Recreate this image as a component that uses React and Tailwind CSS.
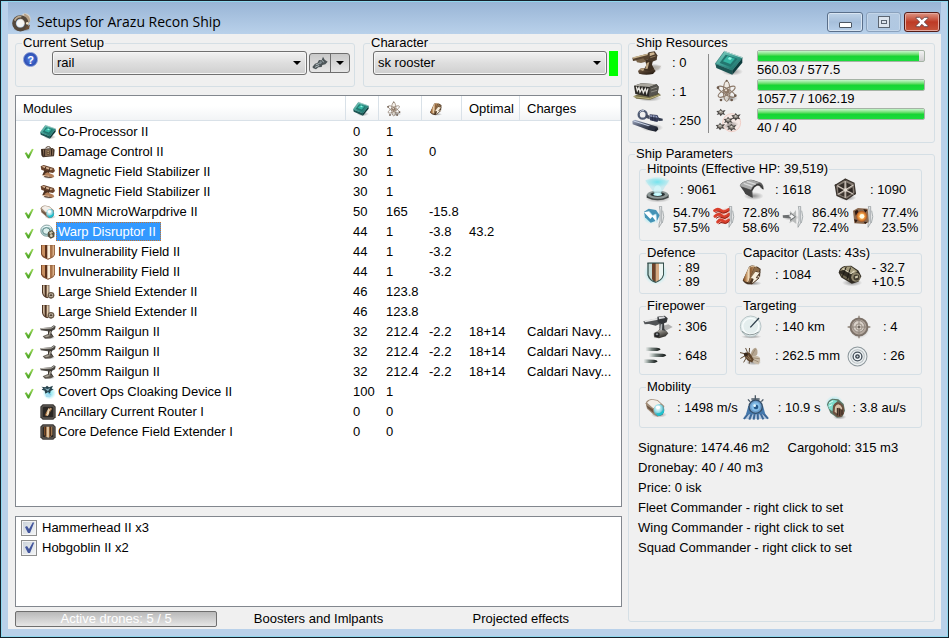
import { useState } from "react";

/* ---------- shared gradients ---------- */

const Gradients = () => (
  <svg width="0" height="0" className="absolute" aria-hidden="true">
    <defs>
      <linearGradient id="teal" x1="0" y1="0" x2="1" y2="1">
        <stop offset="0" stopColor="#8fd9cb" />
        <stop offset="0.5" stopColor="#3a9d92" />
        <stop offset="1" stopColor="#155e5a" />
      </linearGradient>
      <linearGradient id="bronze" x1="0" y1="0" x2="1" y2="0">
        <stop offset="0" stopColor="#6b3f1d" />
        <stop offset="0.25" stopColor="#b98552" />
        <stop offset="0.5" stopColor="#f6e3c4" />
        <stop offset="0.65" stopColor="#8a5a30" />
        <stop offset="1" stopColor="#c49a6c" />
      </linearGradient>
      <linearGradient id="metal" x1="0" y1="0" x2="0.6" y2="1">
        <stop offset="0" stopColor="#d9d6d0" />
        <stop offset="0.45" stopColor="#7b7872" />
        <stop offset="1" stopColor="#24221f" />
      </linearGradient>
      <linearGradient id="brown" x1="0" y1="0" x2="0.7" y2="1">
        <stop offset="0" stopColor="#b8a07f" />
        <stop offset="0.4" stopColor="#5f4a37" />
        <stop offset="1" stopColor="#251b12" />
      </linearGradient>
      <linearGradient id="steel" x1="0" y1="0" x2="0.6" y2="1">
        <stop offset="0" stopColor="#a9b3c9" />
        <stop offset="0.5" stopColor="#4e566b" />
        <stop offset="1" stopColor="#1d212c" />
      </linearGradient>
      <radialGradient id="sphere" cx="0.4" cy="0.35" r="0.7">
        <stop offset="0" stopColor="#ffffff" />
        <stop offset="0.5" stopColor="#8edbe6" />
        <stop offset="1" stopColor="#23707c" />
      </radialGradient>
      <radialGradient id="glow">
        <stop offset="0" stopColor="#6fe3ee" stopOpacity="0.95" />
        <stop offset="0.6" stopColor="#8fe6ee" stopOpacity="0.55" />
        <stop offset="1" stopColor="#a5eef4" stopOpacity="0" />
      </radialGradient>
      <radialGradient id="fire">
        <stop offset="0" stopColor="#fff7cf" />
        <stop offset="0.45" stopColor="#ffb254" />
        <stop offset="1" stopColor="#b4551a" />
      </radialGradient>
      <radialGradient id="shade">
        <stop offset="0" stopColor="#000" stopOpacity="0.4" />
        <stop offset="1" stopColor="#000" stopOpacity="0" />
      </radialGradient>
      <linearGradient id="leaf" x1="0" y1="0" x2="0" y2="1">
        <stop offset="0" stopColor="#a6e060" />
        <stop offset="1" stopColor="#3d9a1c" />
      </linearGradient>
    </defs>
  </svg>
);

const Svg = ({ box, className, children }) => (
  <svg viewBox={box} className={`shrink-0 ${className}`} aria-hidden="true">
    {children}
  </svg>
);

/* ---------- icons ---------- */

const AppIcon = () => (
  <Svg box="0 0 60 60" className="w-5 h-5">
    <ellipse cx="30" cy="52" rx="28" ry="7" fill="url(#shade)" />
    <circle cx="40" cy="20" r="16" fill="#d8d2c8" />
    <path d="M36 5c12 2 20 12 18 24l-8 6-8-16z" fill="#b59f85" />
    <circle cx="25" cy="34" r="19" fill="none" stroke="#54483c" strokeWidth="11" />
    <path d="M8 26a19 19 0 0 1 20-12" fill="none" stroke="#b9a78f" strokeWidth="5" />
    <circle cx="25" cy="34" r="11" fill="#f6f5f2" />
    <path d="M42 44l12-6-3 13-13 4z" fill="#6b5038" />
    <circle cx="46" cy="34" r="4" fill="#efe2c8" />
  </Svg>
);

const Chip = ({ className = "w-4 h-4" }) => (
  <Svg box="0 0 84 76" className={className}>
    <ellipse cx="52" cy="64" rx="32" ry="12" fill="url(#shade)" />
    <path d="M1 40l51 20v13L4 53z" fill="#1d5553" />
    <path d="M52 60l30-38v15L52 73z" fill="#0d3c3d" />
    <path d="M28 3l54 19-30 38L1 40z" fill="url(#teal)" stroke="#24716c" strokeWidth="2" />
    <path d="M32 13l36 12-21 25-33-12z" fill="#23766f" />
    <path d="M37 17l23 8-14 16-22-8z" fill="#35b5a3" />
    <path d="M43 20l8 3-5 6-8-3z" fill="#8ff5e2" />
    <path d="M28 3l54 19" stroke="#b5ddd6" strokeWidth="3" />
  </Svg>
);

const Atom = ({ className = "w-4 h-4" }) => (
  <Svg box="0 0 70 72" className={className}>
    <ellipse cx="42" cy="58" rx="26" ry="10" fill="url(#shade)" />
    <g fill="none" stroke="#8b7868" strokeWidth="3">
      <ellipse cx="34" cy="36" rx="10" ry="31" fill="#efe6da" fillOpacity="0.6" />
      <ellipse cx="34" cy="38" rx="9" ry="29" transform="rotate(60 34 38)" />
      <ellipse cx="34" cy="38" rx="9" ry="29" transform="rotate(-60 34 38)" />
    </g>
    <circle cx="34" cy="37" r="8" fill="#8d7866" />
    <circle cx="32" cy="34" r="3" fill="#f0e4d8" />
    <g fill="#6b594b">
      <circle cx="34" cy="5" r="3" />
      <circle cx="8" cy="26" r="4" />
      <circle cx="60" cy="50" r="4" />
      <circle cx="17" cy="63" r="4" />
      <circle cx="49" cy="63" r="4" />
    </g>
  </Svg>
);

const Cell = ({ className = "w-4 h-4" }) => (
  <Svg box="0 0 66 66" className={className}>
    <ellipse cx="36" cy="58" rx="26" ry="7" fill="url(#shade)" />
    <path d="M24 8Q34 0 51 9l8 6-2 25-24 20Q16 64 5 50z" fill="#4a3523" />
    <path d="M24 9Q32 3 41 6L22 55Q11 54 6 48z" fill="url(#bronze)" />
    <path d="M42 7l14 9-2 9-10-4-10 21-9 14-4-1z" fill="#8c6b48" />
    <path d="M43 23l14 3-6 10 7 3-26 23 6-17-8-4z" fill="#f7eedd" />
    <path d="M57 26L46 41l8 1-22 19" fill="none" stroke="#4a3220" strokeWidth="3" />
    <path d="M28 9Q36 4 46 8" fill="none" stroke="#d9c5a8" strokeWidth="3" />
  </Svg>
);

const Turret = () => (
  <Svg box="0 0 90 72" className="w-[30px] h-6">
    <ellipse cx="66" cy="50" rx="24" ry="12" fill="url(#shade)" />
    <path d="M62 44l26 0-8 11-20 6z" fill="#b9b4aa" opacity="0.7" />
    <path d="M18 60l8-8 36-3 9 11-8 9q-22 5-42-1z" fill="url(#brown)" />
    <path d="M24 55l14-4 8 3-15 6z" fill="#b49d7c" />
    <path d="M39 27l25-4-4 18 6 12-12 7-19-2 8-16z" fill="#3d2e20" />
    <path d="M44 36l8-3-5 20-7 1z" fill="#bda684" />
    <path d="M50 4l18-3 8 12-2 14-13 5-14-5-4-12z" fill="#49392a" />
    <path d="M53 6l12-2 4 6-16 6z" fill="#cdb591" />
    <path d="M1 20l45-12 6 8-2 9-17 5-11-3-19 3z" fill="#56432f" />
    <path d="M3 21l44-11" stroke="#c9b48f" strokeWidth="4" />
    <path d="M12 28l22-6 8 10-15 4-12-2z" fill="#79644a" />
    <path d="M55 20l16-5" stroke="#927b5c" strokeWidth="3" />
  </Svg>
);

const Launcher = () => (
  <Svg box="0 0 90 60" className="w-[30px] h-5">
    <ellipse cx="52" cy="49" rx="37" ry="10" fill="url(#shade)" />
    <path d="M4 43l16-7 60-3 7 7-33 13-41-3z" fill="#77704a" />
    <path d="M6 11L28 4l46 3 6 7-3 22-27 8L10 36z" fill="#2b2925" />
    <path d="M6 11L28 4l46 3-22 8z" fill="#aaa79e" />
    <path d="M53 15l21-8 6 7-3 22-26 8z" fill="#56544e" />
    <path d="M13 14l3 12 5-9 3 13 6-11 4 13 6-12 4 13 4-14" fill="none" stroke="#e8e6e0" strokeWidth="4" />
    <path d="M57 21l18-6M57 30l18-5" stroke="#8d8b83" strokeWidth="3" />
    <path d="M5 44l47 6 31-11" fill="none" stroke="#c0b782" strokeWidth="3" />
  </Svg>
);

const Calibration = () => (
  <Svg box="0 0 96 72" className="w-8 h-6">
    <ellipse cx="60" cy="56" rx="34" ry="12" fill="url(#shade)" />
    <circle cx="32" cy="17" r="12" fill="none" stroke="#515c74" strokeWidth="7" />
    <path d="M23 10a12 12 0 0 1 13-5" fill="none" stroke="#c5cee0" strokeWidth="3" />
    <path d="M43 16l10 4v11l-12-5z" fill="#444b5e" />
    <path d="M53 16l23 2 6 11-6 10-22-5z" fill="#353b58" />
    <path d="M55 18l19 2 3 6-22-3z" fill="#9aa4c6" />
    <path d="M61 18v17M69 20v17" stroke="#20243a" strokeWidth="2" />
    <path d="M80 26l12 3v6l-13 1z" fill="#323a4d" />
    <path d="M1 36l8-4 43 14 24 7 3 8-7 7-22-5L2 46z" fill="url(#steel)" />
    <path d="M5 36l48 15" stroke="#c9d3e6" strokeWidth="3" />
    <path d="M50 50l20 7-3 8-18-4z" fill="#2d3344" />
  </Svg>
);

const DroneShape = ({ x, y }) => (
  <g transform={`translate(${x} ${y})`}>
    <path d="M0 7l9-1 4-6 5 6 10-2-6 8 5 7-9-2-5 6-4-6-8 2 4-6z" fill="#4a4744" />
    <path d="M6 9l7-4 5 3 3 4-6 3-6-1z" fill="#9a948c" />
    <circle cx="13" cy="9" r="2" fill="#e8e4dc" />
  </g>
);

const Drones = () => (
  <Svg box="0 0 84 78" className="w-7 h-[26px]">
    <circle cx="50" cy="44" r="27" fill="#f9e4dd" fillOpacity="0.6" stroke="#efc0b5" strokeWidth="2" />
    <path d="M22 54l38-16 12 10-30 18z" fill="url(#shade)" />
    <DroneShape x={4} y={2} />
    <DroneShape x={49} y={15} />
    <DroneShape x={26} y={26} />
    <DroneShape x={2} y={44} />
    <DroneShape x={36} y={47} />
  </Svg>
);

const ShieldHp = () => (
  <Svg box="0 0 84 78" className="w-7 h-[26px]">
    <ellipse cx="42" cy="65" rx="38" ry="12" fill="url(#shade)" />
    <path d="M8 53l16-9h34l16 9v9q-33 15-66 0z" fill="#3f4444" />
    <ellipse cx="41" cy="53" rx="32" ry="12" fill="#8d9796" />
    <ellipse cx="41" cy="52" rx="22" ry="7" fill="#2a3334" />
    <ellipse cx="41" cy="52" rx="13" ry="5" fill="#bffaff" />
    <path d="M4 10q20-8 40-3t32 2L50 50H32z" fill="#9fe0ea" opacity="0.45" />
    <ellipse cx="40" cy="15" rx="39" ry="17" fill="url(#glow)" />
    <ellipse cx="41" cy="40" rx="11" ry="15" fill="#d9fcff" opacity="0.6" />
  </Svg>
);

const Armor = () => (
  <Svg box="0 0 78 68" className="w-[26px] h-6">
    <ellipse cx="44" cy="52" rx="30" ry="12" fill="url(#shade)" />
    <path d="M2 22Q4 14 12 10L28 4q8-2 14 0l24 8q8 6 8 20l-8-3q-4-10-12-8-8 3-14 16l2 20-24-12-3-14z" fill="#5b5b5b" />
    <path d="M3 22Q6 13 14 10L28 5q7-2 13 0l22 8q-18-1-27 20z" fill="#a9aaaa" />
    <path d="M14 14l26 9M24 9l26 8" stroke="#d9dada" strokeWidth="4" />
    <path d="M5 24l32 11 3 22-20-11z" fill="#444" />
    <path d="M38 36q8-19 22-18 11 4 12 14" fill="none" stroke="#2d2d2d" strokeWidth="3" />
  </Svg>
);

const Hull = () => (
  <Svg box="0 0 68 70" className="w-[23px] h-6">
    <ellipse cx="40" cy="58" rx="26" ry="9" fill="url(#shade)" />
    <path d="M33 3l26 12 4 30-26 18L9 51 4 21z" fill="#857b72" stroke="#3b342e" strokeWidth="4" />
    <path d="M31 13L14 22l16 10zM37 13l16 8-15 11z" fill="#352e29" />
    <path d="M12 27l16 9-15 10zM55 27L40 36l16 8z" fill="#2b2521" />
    <path d="M31 40v15L17 49zM37 40v15l16-9z" fill="#3c342e" />
    <path d="M33 8v51M9 22l49 26M58 20L11 48" stroke="#d8cfc6" strokeWidth="3" />
    <circle cx="34" cy="35" r="5" fill="#e6ded5" />
    <circle cx="33" cy="5" r="3" fill="#3b342e" />
    <circle cx="61" cy="46" r="3" fill="#3b342e" />
    <circle cx="5" cy="21" r="3" fill="#3b342e" />
  </Svg>
);

/* curved plate standing right of every damage type */
const Plate = () => (
  <g>
    <path d="M49 1h7v50l-8 13V54l3-9V14z" fill="#e0e3e4" stroke="#8d9396" strokeWidth="2" />
    <path d="M59 14q7 18-1 37" fill="none" stroke="#a9afb1" strokeWidth="3" />
  </g>
);

const Em = () => (
  <Svg box="0 0 66 66" className="w-[22px] h-[22px]">
    <ellipse cx="24" cy="31" rx="25" ry="24" fill="url(#glow)" />
    <path d="M3 17l14-9 22 4 11 16-7 15-20 7L6 34z" fill="#2f84ab" opacity="0.85" />
    <path d="M18 16L3 19l19 20 6-7 14 18-3-26-10 4z" fill="#fff" />
    <path d="M18 16l11 13 10-5 3 26" fill="none" stroke="#9fd4ea" strokeWidth="2" />
    <Plate />
  </Svg>
);

const Thermal = () => (
  <Svg box="0 0 66 66" className="w-[22px] h-[22px]">
    <path d="M14 12l35-6v46l-31 2z" fill="#f0a295" opacity="0.6" />
    <g fill="none" stroke="#d93f2c" strokeWidth="9" strokeLinecap="round">
      <path d="M5 14q10-8 19 0t24-4" />
      <path d="M6 31q12-11 20-2t22-4" />
      <path d="M14 48q8-10 16-3t18-3" />
    </g>
    <g fill="none" stroke="#8f2116" strokeWidth="3">
      <path d="M7 20q11-7 17-1t23-4M9 37q10-9 18-2t20-4M17 54q7-8 14-3t16-4" />
    </g>
    <Plate />
  </Svg>
);

const Kinetic = () => (
  <Svg box="0 0 66 66" className="w-[22px] h-[22px]">
    <ellipse cx="26" cy="34" rx="26" ry="9" fill="url(#shade)" />
    <path d="M24 14l9 9 9-11 1 42-11-8-10 6 5-17z" fill="#b9bbbb" />
    <path d="M2 28l24-2-3-7 19 13-18 14 2-9-23-2z" fill="#6c6f70" />
    <path d="M20 29l8-2-2-4 12 9-12 8 1-5z" fill="#f3f3f3" />
    <Plate />
  </Svg>
);

const Explosive = () => (
  <Svg box="0 0 66 66" className="w-[22px] h-[22px]">
    <path d="M3 14L18 6l29 2 4 40-12 6L7 52z" fill="#8b6a50" />
    <path d="M8 16l8-5 4 8-9 10zM6 40l11 2-6 9zM34 9l12 3-6 8zM35 47l11 1-6 6z" fill="#2f1a11" />
    <circle cx="29" cy="31" r="16" fill="url(#fire)" />
    <circle cx="30" cy="31" r="7" fill="#fffde9" />
    <Plate />
  </Svg>
);

const DefenceShield = () => (
  <Svg box="0 0 72 72" className="w-6 h-6">
    <ellipse cx="35" cy="36" rx="36" ry="36" fill="url(#glow)" />
    <path d="M10 6h50v36q-5 17-25 24Q15 60 10 42z" fill="#3b5450" />
    <path d="M14 7h12v52Q17 52 14 41z" fill="#c4dcd7" />
    <path d="M24 7h11v55l-11-7z" fill="#6d4129" />
    <path d="M35 7h10v50l-10 6z" fill="#d6ab84" />
    <path d="M45 7h12v34q-3 12-12 17z" fill="#edf5f2" />
    <path d="M10 6h50" stroke="#24403f" strokeWidth="3" />
  </Svg>
);

const Recharge = () => (
  <Svg box="0 0 76 68" className="w-[25px] h-[23px]">
    <ellipse cx="43" cy="56" rx="31" ry="11" fill="url(#shade)" />
    <path d="M2 26Q4 10 20 5l20-1 22 15 9 17-9 17-20 6L10 40z" fill="#302b22" />
    <path d="M6 20Q12 9 22 7l17 0 20 14-11 8-26-14z" fill="#a59c7d" />
    <path d="M14 13l26 15 10-8" fill="none" stroke="#ded7bc" strokeWidth="4" />
    <path d="M7 27l26 15 2 9-23-13z" fill="#6c644e" />
    <path d="M25 8L13 38M38 10L27 46" stroke="#1b1812" strokeWidth="3" />
    <circle cx="54" cy="39" r="14" fill="#8d846b" />
    <circle cx="56" cy="40" r="9" fill="#3f392d" />
    <path d="M51 37l9-3 1 6-8 3z" fill="#cfc7ab" />
  </Svg>
);

const Gun = () => (
  <Svg box="0 0 90 72" className="w-[30px] h-6">
    <path d="M48 36l28-8 13 8-17 9-18 9z" fill="#b0b0b0" />
    <path d="M1 19l45-9 7 3 1 12-16 7-20-5-13 1z" fill="#505356" />
    <path d="M5 19l44-8" stroke="#e4e4e4" strokeWidth="5" />
    <path d="M43 5l22-3 9 8-3 12-15 6-12-7z" fill="#33363a" />
    <path d="M47 6l16-2 4 5-19 4z" fill="#d8dadd" />
    <path d="M49 26l14-4 1 20 8 10-14 6-16-6 8-10z" fill="#3a3d40" />
    <path d="M53 28l5-1-1 20-6 1z" fill="#b6babd" />
    <path d="M32 54l18-10 20 4 6 7-8 9-20 6-15-3z" fill="url(#metal)" />
    <ellipse cx="42" cy="59" rx="8" ry="7" fill="#1f2023" />
    <ellipse cx="42" cy="58" rx="4" ry="3" fill="#8e9195" />
  </Svg>
);

const Volley = () => (
  <Svg box="0 0 72 60" className="w-6 h-5">
    <defs>
      <linearGradient id="trail">
        <stop offset="0" stopColor="#8fa39a" stopOpacity="0" />
        <stop offset="0.4" stopColor="#7d8985" />
        <stop offset="1" stopColor="#090d0c" />
      </linearGradient>
    </defs>
    <path d="M7 4l35 1q8 1 11 5-3 4-10 5H7z" fill="url(#trail)" />
    <path d="M17 22l42 1q8 1 11 5-3 4-10 5H17z" fill="url(#trail)" />
    <path d="M1 40l32 1q8 1 11 5-3 4-10 5H1z" fill="url(#trail)" />
  </Svg>
);

const Range = () => (
  <Svg box="0 0 72 72" className="w-6 h-6">
    <ellipse cx="37" cy="65" rx="31" ry="6" fill="url(#shade)" />
    <circle cx="35" cy="34" r="31" fill="#e4eeee" stroke="#b9c6c8" strokeWidth="3" />
    <circle cx="35" cy="34" r="24" fill="none" stroke="#f9fdfd" strokeWidth="4" />
    <path d="M34 37L60 9" stroke="#2e3f4b" strokeWidth="4" />
    <path d="M9 49q22 20 50 2" fill="none" stroke="#8c9899" strokeWidth="3" />
  </Svg>
);

const Targets = () => (
  <Svg box="0 0 74 74" className="w-6 h-6">
    <circle cx="39" cy="42" r="31" fill="url(#shade)" />
    <path d="M37 2v70M2 37h70" stroke="#8d8278" strokeWidth="4" />
    <circle cx="37" cy="37" r="26" fill="#b3a79d" stroke="#7d7269" strokeWidth="6" />
    <circle cx="36" cy="35" r="18" fill="#d9d1c9" stroke="#91877e" strokeWidth="3" />
    <path d="M37 15v44M15 37h44" stroke="#8f857b" strokeWidth="3" />
    <circle cx="37" cy="37" r="10" fill="none" stroke="#998f85" strokeWidth="3" />
    <circle cx="37" cy="37" r="3" fill="#5d544c" />
  </Svg>
);

const Fly = () => (
  <Svg box="0 0 70 64" className="w-[23px] h-[21px]">
    <ellipse cx="44" cy="50" rx="24" ry="9" fill="url(#shade)" />
    <path d="M34 28Q40 6 51 5q8 6 4 22l-14 12z" fill="#b5a692" />
    <path d="M38 34q16-9 26 2 3 10-4 20-14 0-20-10z" fill="#c9bca9" />
    <path d="M38 30L50 9M41 40l19 9M42 36l21 3" stroke="#8c7960" strokeWidth="2" />
    <path d="M20 24L3 20M18 30L4 38M22 36l-8 14M26 20l-6-14M31 20l1-14M32 40l-1 14" fill="none" stroke="#5d4832" strokeWidth="3" />
    <path d="M17 25q7-9 16-4l12 20-5 9-14-6-9-11z" fill="#5e4329" />
    <path d="M25 26l12 17M21 31l11 11" stroke="#b2997a" strokeWidth="2" />
    <circle cx="21" cy="26" r="6" fill="#38281b" />
  </Svg>
);

const Rings = () => (
  <Svg box="0 0 62 62" className="w-[21px] h-[21px]">
    <circle cx="31" cy="31" r="28" fill="#edf1f2" stroke="#8d979c" strokeWidth="3" />
    <circle cx="31" cy="31" r="20" fill="none" stroke="#b9c0c4" strokeWidth="3" />
    <circle cx="31" cy="31" r="13" fill="#f4f8fb" stroke="#46515b" strokeWidth="4" />
    <circle cx="31" cy="31" r="5" fill="#c6d0d9" stroke="#323c45" strokeWidth="4" />
  </Svg>
);

const Speed = ({ className = "w-[22px] h-5" }) => (
  <Svg box="0 0 66 60" className={className}>
    <ellipse cx="42" cy="50" rx="24" ry="9" fill="url(#shade)" />
    <path d="M2 16Q6 4 20 3l18 3 20 18-4 22-16 10-12-6L6 32z" fill="#a08b76" />
    <path d="M6 14Q12 5 21 5l16 3 10 9-22 14z" fill="#f3eee8" />
    <path d="M4 22l20 12 2 12L8 30z" fill="#6d5542" />
    <ellipse cx="42" cy="36" rx="16" ry="18" fill="url(#sphere)" />
    <path d="M34 44q12 6 22-10l1 8q-8 13-20 11z" fill="#1fc3cf" />
    <ellipse cx="39" cy="28" rx="7" ry="5" fill="#fff" />
  </Svg>
);

const Align = () => (
  <Svg box="0 0 84 78" className="w-7 h-[26px]">
    <path d="M12 56h58l11 16H2z" fill="#9bb8d7" opacity="0.7" />
    <path d="M20 54L6 72M29 56l-7 18M38 56l-3 18M47 56l1 18M56 56l8 17M63 54l15 17" stroke="#3c6797" strokeWidth="6" />
    <path d="M19 33l44-1 7 26H12z" fill="#4478ac" />
    <circle cx="41" cy="35" r="20" fill="#6b9cca" stroke="#334e69" strokeWidth="4" />
    <circle cx="41" cy="35" r="13" fill="#83bde8" />
    <circle cx="42" cy="36" r="7" fill="#245788" />
    <circle cx="38" cy="32" r="4" fill="#e5f8ff" />
    <path d="M40 15V1M28 12h25M24 20l-6-7M58 20l6-7" fill="none" stroke="#4b5966" strokeWidth="4" />
  </Svg>
);

const Warp = () => (
  <Svg box="0 0 66 72" className="w-[22px] h-6">
    <ellipse cx="44" cy="63" rx="20" ry="8" fill="url(#shade)" />
    <ellipse cx="28" cy="24" rx="28" ry="26" fill="url(#glow)" />
    <path d="M6 26Q8 12 22 8l18 2 16 14 4 20-8 18-16 3-20-14z" fill="#5d7666" />
    <path d="M9 26q4-12 15-15l14 3-14 15-2 17-10-8z" fill="#7fdccd" />
    <path d="M24 34q2-13 14-15 14 2 19 16v18l-9 10H37L24 52z" fill="#6d5140" />
    <path d="M30 33q4-8 10-8 8 2 11 10v6l-8-6-6 1v17l-8-6z" fill="#d8c3aa" />
    <path d="M37 36v22M44 38v22M51 41v16" stroke="#33271f" strokeWidth="3" />
    <path d="M12 21l12-6M11 31l10-5" stroke="#dffff4" strokeWidth="3" />
  </Svg>
);

/* ---------- 16px module icons ---------- */

const Case = () => (
  <Svg box="0 0 48 48" className="w-4 h-4">
    <path d="M17 13q1-5 8-5t7 5" fill="none" stroke="#4b3727" strokeWidth="3" />
    <path d="M3 15l35-3 6 5-2 20-33 3-5-6z" fill="#4b3a2d" />
    <path d="M9 17l29-2 1 19-28 3z" fill="#8b7059" />
    <path d="M6 17l3 21M14 16v21M34 15l1 20" stroke="#2f2118" strokeWidth="3" />
    <path d="M20 20h9v12h-9z" fill="#5b4029" />
    <path d="M22 23h5M22 28h5" stroke="#e4ce9d" strokeWidth="2" />
  </Svg>
);

const Coil = () => (
  <Svg box="0 0 48 48" className="w-4 h-4">
    <ellipse cx="26" cy="40" rx="18" ry="5" fill="url(#shade)" />
    <path d="M2 7l9-4 30 9 4 9-6 6-18-3L4 17z" fill="#6b452e" />
    <path d="M5 8l6-2 28 9-7 4z" fill="#dcb898" />
    <path d="M14 18l16 3-6 10 14 4-2 7-21-2-8-7z" fill="#4b3020" />
    <path d="M12 31l10-6 18 7 3 6-8 3z" fill="#b4815b" />
    <path d="M8 34l20 3" stroke="#e6c4a5" strokeWidth="3" />
    <path d="M18 8l-4 9M30 12l-4 9" stroke="#3c2417" strokeWidth="3" />
  </Svg>
);

const Disruptor = () => (
  <Svg box="0 0 48 48" className="w-4 h-4">
    <ellipse cx="20" cy="20" rx="18" ry="17" fill="#a9cbcb" stroke="#6f8b8b" strokeWidth="2" />
    <ellipse cx="19" cy="21" rx="11" ry="10" fill="#dcefed" stroke="#5f8988" strokeWidth="3" />
    <path d="M5 14q12-12 28-4" fill="none" stroke="#f4ffff" strokeWidth="3" />
    <path d="M24 24l12-6 8 8-1 13-11 5-9-7z" fill="#55503f" />
    <path d="M27 26l8-4 4 4-8 5z" fill="#c9c2a8" />
    <circle cx="34" cy="35" r="4" fill="#d9d1b6" />
  </Svg>
);

const Field = () => (
  <Svg box="0 0 48 48" className="w-4 h-4">
    <path d="M3 3h42v28Q42 42 24 47 6 42 3 31z" fill="#7c4b2c" />
    <path d="M6 4h9v34q-8-4-9-9z" fill="#c88f60" />
    <path d="M15 4h8v39l-8-4z" fill="#5a301a" />
    <path d="M22 4h8v38l-8 2z" fill="#fbeeda" />
    <path d="M30 4h6v36l-6 2z" fill="#a8734a" />
    <path d="M37 4h6v26q-1 5-6 9z" fill="#dcae84" />
  </Svg>
);

const Extender = () => (
  <Svg box="0 0 48 48" className="w-4 h-4">
    <path d="M6 3h22v34l-6 6Q8 38 6 26z" fill="#4b3222" />
    <path d="M9 4h5v32q-5-4-5-12z" fill="#cdb79e" />
    <path d="M20 4h6v32l-6 4z" fill="#e3cdb0" />
    <circle cx="33" cy="34" r="8" fill="#e5ddd0" stroke="#6b5b49" strokeWidth="4" />
    <path d="M33 24v20M23 34h20" stroke="#6b5b49" strokeWidth="2" />
    <circle cx="33" cy="34" r="3" fill="#493a2b" />
  </Svg>
);

const Railgun = () => (
  <Svg box="0 0 48 48" className="w-4 h-4">
    <ellipse cx="28" cy="41" rx="18" ry="5" fill="url(#shade)" />
    <path d="M1 13l32-3 8-6 6 3-2 9-14 7-13-2-16-2z" fill="#4b4843" />
    <path d="M3 14l31-2 9-5" fill="none" stroke="#bebbb3" strokeWidth="3" />
    <path d="M24 20l13-3-3 10 6 10-9 5-14-2 7-9z" fill="#3b3630" />
    <path d="M29 22l4-1-3 14h-5z" fill="#b3ada0" />
    <path d="M8 37l14-6 14 2 6 5-10 5-17 1z" fill="#5d564d" />
    <path d="M12 37l12-4 8 2-13 5z" fill="#a59f93" />
  </Svg>
);

const Cloak = () => (
  <Svg box="0 0 48 48" className="w-4 h-4">
    <circle cx="28" cy="27" r="20" fill="url(#glow)" />
    <path d="M4 8l12 2 5-5 6 5 12-5-4 9 6 2-9 5-2 8-6-4-8 4-2-9-9-3 5-4z" fill="#27434d" />
    <path d="M12 12l11 3 8-4-7 11z" fill="#7fa9b8" />
    <path d="M16 31l10-3 10 4-6 8-12-1z" fill="#a6dcf0" />
    <path d="M23 25l8 6" stroke="#4aa6c9" strokeWidth="3" />
  </Svg>
);

const Rig = ({ children }) => (
  <Svg box="0 0 48 48" className="w-4 h-4">
    <path d="M8 1h32l7 7v32l-7 7H8l-7-7V8z" fill="#3c3936" />
    <path d="M10 4h28l6 6v28l-6 6H10l-6-6V10z" fill="#5b5651" />
    <path d="M11 8h26l3 3v26l-3 3H11l-3-3V11z" fill="#2a2724" />
    {children}
  </Svg>
);

const Router = () => (
  <Rig>
    <path d="M26 12q6-3 10 2L24 35q-6 3-10-2z" fill="url(#bronze)" />
    <path d="M31 14L20 33" stroke="#f4e2c3" strokeWidth="3" />
  </Rig>
);

const CoreRig = () => (
  <Rig>
    <path d="M12 8h25v24q-3 6-12 9-10-3-13-9z" fill="url(#bronze)" />
    <path d="M17 8v28M32 8v28" stroke="#3d2517" strokeWidth="3" />
  </Rig>
);

const Tick = () => (
  <Svg box="0 0 30 33" className="w-[10px] h-[11px]">
    <path d="M2 15l6-2 5 8L24 2l5 2-14 28-4-1z" fill="url(#leaf)" />
  </Svg>
);

const Caret = ({ className = "" }) => (
  <svg viewBox="0 0 8 4" className={`w-2 h-1 pointer-events-none ${className}`} aria-hidden="true">
    <path d="M0 0h8L4 4z" fill="#000" />
  </svg>
);

/* ---------- data ---------- */

const modules = [
  { name: "Co-Processor II", icon: <Chip />, cpu: "0", pg: "1" },
  { name: "Damage Control II", icon: <Case />, on: true, cpu: "30", pg: "1", cap: "0" },
  { name: "Magnetic Field Stabilizer II", icon: <Coil />, cpu: "30", pg: "1" },
  { name: "Magnetic Field Stabilizer II", icon: <Coil />, cpu: "30", pg: "1" },
  { name: "10MN MicroWarpdrive II", icon: <Speed className="w-4 h-4" />, on: true, cpu: "50", pg: "165", cap: "-15.8" },
  { name: "Warp Disruptor II", icon: <Disruptor />, on: true, cpu: "44", pg: "1", cap: "-3.8", optimal: "43.2" },
  { name: "Invulnerability Field II", icon: <Field />, on: true, cpu: "44", pg: "1", cap: "-3.2" },
  { name: "Invulnerability Field II", icon: <Field />, on: true, cpu: "44", pg: "1", cap: "-3.2" },
  { name: "Large Shield Extender II", icon: <Extender />, cpu: "46", pg: "123.8" },
  { name: "Large Shield Extender II", icon: <Extender />, cpu: "46", pg: "123.8" },
  { name: "250mm Railgun II", icon: <Railgun />, on: true, cpu: "32", pg: "212.4", cap: "-2.2", optimal: "18+14", charges: "Caldari Navy..." },
  { name: "250mm Railgun II", icon: <Railgun />, on: true, cpu: "32", pg: "212.4", cap: "-2.2", optimal: "18+14", charges: "Caldari Navy..." },
  { name: "250mm Railgun II", icon: <Railgun />, on: true, cpu: "32", pg: "212.4", cap: "-2.2", optimal: "18+14", charges: "Caldari Navy..." },
  { name: "Covert Ops Cloaking Device II", icon: <Cloak />, on: true, cpu: "100", pg: "1" },
  { name: "Ancillary Current Router I", icon: <Router />, cpu: "0", pg: "0" },
  { name: "Core Defence Field Extender I", icon: <CoreRig />, cpu: "0", pg: "0" },
];

const drones = ["Hammerhead II x3", "Hobgoblin II x2"];

const slots = [
  { label: "Turrets", icon: <Turret />, value: ": 0" },
  { label: "Launchers", icon: <Launcher />, value: ": 1" },
  { label: "Calibration", icon: <Calibration />, value: ": 250" },
];

const bars = [
  { label: "CPU", icon: <Chip className="w-7 h-[26px]" />, text: "560.03 / 577.5", pct: 97 },
  { label: "Powergrid", icon: <Atom className="w-6 h-6" />, text: "1057.7 / 1062.19", pct: 100 },
  { label: "Drone bay", icon: <Drones />, text: "40 / 40", pct: 100 },
];

const hitpoints = [
  { icon: <ShieldHp />, value: ": 9061" },
  { icon: <Armor />, value: ": 1618" },
  { icon: <Hull />, value: ": 1090" },
];

const resists = [
  { icon: <Em />, shield: "54.7%", armor: "57.5%" },
  { icon: <Thermal />, shield: "72.8%", armor: "58.6%" },
  { icon: <Kinetic />, shield: "86.4%", armor: "72.4%" },
  { icon: <Explosive />, shield: "77.4%", armor: "23.5%" },
];

const notes = [
  "Dronebay: 40 / 40 m3",
  "Price: 0 isk",
  "Fleet Commander - right click to set",
  "Wing Commander - right click to set",
  "Squad Commander - right click to set",
];

/* ---------- building blocks ---------- */

const Group = ({ title, className = "", children }) => (
  <fieldset className={`min-w-0 border border-[#d5dfe5] rounded-[3px] ${className}`}>
    <legend className="ml-[6px] px-px leading-4">{title}</legend>
    {children}
  </fieldset>
);

const Stat = ({ icon, slot = "w-8", children }) => (
  <div className="flex items-center h-7 whitespace-nowrap">
    <span className={`${slot} shrink-0 flex items-center`}>{icon}</span>
    <span>{children}</span>
  </div>
);

const Picker = ({ label, options }) => (
  <div className="relative flex-1 min-w-0">
    <select
      aria-label={label}
      className="block w-full h-6 pl-1 appearance-none rounded-[3px] border border-[#707070] bg-linear-to-b from-[#f2f2f2] via-[#dedede] to-[#cfcfcf] shadow-[inset_0_0_0_1px_#f6f6f6]"
    >
      {options.map((o) => (
        <option key={o}>{o}</option>
      ))}
    </select>
    <Caret className="absolute right-[6px] top-[10px]" />
  </div>
);

const TitleBar = () => (
  <header className="flex items-end h-8 pb-[2px] pl-1 bg-linear-to-b from-[#99b5d6] to-[#b9d1ea]">
    <AppIcon />
    <h1 className="ml-[5px] flex-1 text-sm leading-5 font-['Open_Sans','Noto_Sans',sans-serif] text-black">
      Setups for Arazu Recon Ship
    </h1>
    <div className="flex gap-[3px] pr-px">
      <button aria-label="Minimize" className="w-9 h-5 flex items-end justify-center pb-[3px] rounded-[3px] border border-[#5a6f8a] bg-linear-to-b from-[#bfd3e8] via-[#a6bfdb] to-[#b6cee8] shadow-[inset_0_0_0_1px_#d8e5f2]">
        <span className="w-[13px] h-[6px] rounded-[1px] border border-[#4b5663] bg-white" />
      </button>
      <button aria-label="Maximize" className="w-[35px] h-5 flex items-center justify-center rounded-[3px] border border-[#8ba2bd] bg-linear-to-b from-[#b3c9e1] to-[#b0c8e2] shadow-[inset_0_0_0_1px_#c4d6e9]">
        <span className="w-3 h-3 flex items-center justify-center border border-[#5c6672] bg-[#dde5ee]">
          <span className="w-[6px] h-1 border border-[#5c6672]" />
        </span>
      </button>
      <button aria-label="Close" className="w-9 h-5 flex items-center justify-center rounded-[3px] border border-[#541c17] bg-linear-to-b from-[#dd9382] via-[#bd3a25] to-[#c5543b] shadow-[inset_0_0_0_1px_#e5aaa0]">
        <svg viewBox="0 0 12 10" className="w-[14px] h-3" aria-hidden="true">
          <path d="M1 1h3l2 2 2-2h3v1L8 5l3 3v1H8L6 7 4 9H1V8l3-3-3-3z" fill="#fff" stroke="#5a3a3f" strokeWidth="0.7" />
        </svg>
      </button>
    </div>
  </header>
);

const SetupGroup = () => (
  <Group title="Current Setup" className="flex-1 h-[52px] pr-1">
    <div className="flex items-start pl-[7px]">
      <button
        aria-label="Help"
        className="w-[15px] h-[15px] mt-px mr-[14px] rounded-full bg-radial from-[#5a83e6] to-[#18359b] border border-[#7d93d4] text-white text-[11px] leading-3 font-bold"
      >
        ?
      </button>
      <Picker label="Current setup" options={["rail"]} />
      <div className="flex mt-[2px] ml-[2px] h-5 rounded-[3px] border border-[#6e6e6e] bg-linear-to-b from-[#c9c9c9] to-[#e6e6e6]">
        <button aria-label="Ship" className="w-[21px] flex items-center justify-center border-r border-[#6e6e6e]">
          <Svg box="0 0 48 42" className="w-4 h-[14px]">
            <path d="M1 33l8-10 7-2 5-9 8 1 4-11 5 9 9 6-7 8-9 2-2 6-10 1-7 6-8-3z" fill="#4b5457" />
            <path d="M11 27l12-5M9 34l13-6M31 13l4 6" fill="none" stroke="#b4bfc2" strokeWidth="3" />
            <path d="M24 15l7 3-5 7-5-3z" fill="#7e8b90" />
          </Svg>
        </button>
        <button aria-label="Ship menu" className="w-[18px] flex items-center justify-center">
          <Caret />
        </button>
      </div>
    </div>
  </Group>
);

const CharacterGroup = () => (
  <Group title="Character" className="w-[259px] h-[52px]">
    <div className="flex items-start pl-[9px] pr-[3px]">
      <Picker label="Character" options={["sk rooster"]} />
      <span className="w-[9px] h-[25px] ml-[2px] bg-[#00ff00]" />
    </div>
  </Group>
);

const headCell = "h-[25px] p-0 pt-[2px] pl-[7px] text-left font-normal border-r border-b border-[#d9e1e8]";

const ModuleTable = () => {
  const [selected, setSelected] = useState(5);

  return (
    <div className="flex-1 mt-2 border border-[#82878e] bg-white overflow-hidden">
      <table className="w-full table-fixed border-separate border-spacing-0">
        <thead className="bg-linear-to-b from-white from-40% to-[#f1f3f5]">
          <tr>
            <th className={headCell}>Modules</th>
            <th aria-label="CPU" className={`${headCell} w-[33px]`}><Chip /></th>
            <th aria-label="Powergrid" className={`${headCell} w-[43px]`}><Atom /></th>
            <th aria-label="Capacitor" className={`${headCell} w-10`}><Cell className="w-[14px] h-[14px]" /></th>
            <th className={`${headCell} w-[58px]`}>Optimal</th>
            <th className={`${headCell} w-[101px]`}>Charges</th>
          </tr>
        </thead>
        <tbody>
          {modules.map((m, i) => (
            <tr key={i} onClick={() => setSelected(i)} className="*:h-5 *:p-0 *:pt-px *:pl-[7px] *:leading-[19px] *:whitespace-nowrap">
              <td>
                <div className="flex items-center h-[19px]">
                  <span className="w-[17px] pl-px pt-1">{m.on && <Tick />}</span>
                  {m.icon}
                  <span
                    className={
                      i === selected
                        ? "h-[19px] leading-[17px] pl-px pr-1 border border-dotted border-[#c8752c] bg-[#3399ff] text-white"
                        : "pl-[2px]"
                    }
                  >
                    {m.name}
                  </span>
                </div>
              </td>
              <td>{m.cpu}</td>
              <td>{m.pg}</td>
              <td>{m.cap}</td>
              <td>{m.optimal}</td>
              <td>{m.charges}</td>
            </tr>
          ))}
        </tbody>
      </table>
    </div>
  );
};

const DroneList = () => (
  <div className="h-[91px] mt-[9px] px-[5px] pt-px border border-[#82878e] bg-white">
    {drones.map((d) => (
      <label key={d} className="flex items-center h-5">
        <span className="relative w-4 h-4 mr-[5px]">
          <input
            type="checkbox"
            defaultChecked
            className="peer block w-4 h-4 appearance-none border border-[#8e8f8f] bg-linear-to-br from-[#c9d0d8] to-[#f5f7f9] shadow-[inset_0_0_0_1px_#f4f4f4]"
          />
          <svg viewBox="0 0 16 16" className="absolute inset-0 hidden peer-checked:block pointer-events-none" aria-hidden="true">
            <path d="M4 7l2-1 2 3 4-7 1 1-4 10H7z" fill="#43569c" />
          </svg>
        </span>
        {d}
      </label>
    ))}
  </div>
);

const ResourcesGroup = () => (
  <Group title="Ship Resources" className="h-[108px]">
    <div className="flex pl-[3px] pr-[9px] -mt-px">
      <div className="w-[76px] -mt-[2px]">
        {slots.map((s) => (
          <div key={s.label} title={s.label} className="flex items-center h-[29px]">
            <span className="w-10 flex items-center">{s.icon}</span>
            {s.value}
          </div>
        ))}
      </div>
      <div className="w-px mt-1 mb-1 bg-[#8b8b8b]" />
      <div className="flex-1 pl-[6px]">
        {bars.map((b) => (
          <div key={b.label} className="flex h-[29px]">
            <span className="w-[42px] flex items-start">{b.icon}</span>
            <div className="flex-1">
              <div
                role="progressbar"
                aria-label={b.label}
                aria-valuenow={b.pct}
                className="h-3 rounded-[2px] border border-[#a5b3a5] bg-linear-to-b from-[#f3f3f3] to-[#cfcfcf] overflow-hidden"
              >
                <div
                  className="h-full bg-linear-to-b from-[#c5f5cb] via-[#16d434] via-50% to-[#1bdc3c]"
                  style={{ width: `${b.pct}%` }}
                />
              </div>
              <p className="leading-[16px]">{b.text}</p>
            </div>
          </div>
        ))}
      </div>
    </div>
  </Group>
);

const ParametersGroup = () => (
  <Group title="Ship Parameters" className="flex-1 mt-[3px]">
    <div className="flex flex-col gap-1 pl-[10px] pr-3 -mt-px">
      <Group title="Hitpoints (Effective HP: 39,519)" className="h-20">
        <div className="grid grid-cols-[95px_95px_1fr] pl-1 -mt-px">
          {hitpoints.map((h) => (
            <Stat key={h.value} icon={h.icon} slot="w-9">{h.value}</Stat>
          ))}
        </div>
        <div className="grid grid-cols-4 pl-[3px]">
          {resists.map((r) => (
            <div key={r.shield} className="flex items-start pt-px">
              <span className="w-[30px] shrink-0 pt-px">{r.icon}</span>
              <span className="leading-[15px]">
                {r.shield}
                <br />
                {r.armor}
              </span>
            </div>
          ))}
        </div>
      </Group>

      <div className="flex gap-2">
        <Group title="Defence" className="w-[88px] h-[49px]">
          <div className="flex items-start pl-1">
            <span className="w-[34px]"><DefenceShield /></span>
            <span className="leading-[14px]">
              : 89
              <br />: 89
            </span>
          </div>
        </Group>
        <Group title="Capacitor (Lasts: 43s)" className="flex-1 h-[49px]">
          <div className="flex items-center justify-between h-7 pl-[5px] pr-4">
            <Stat icon={<Cell className="w-[22px] h-[22px]" />} slot="w-[34px]">: 1084</Stat>
            <div className="flex items-center">
              <span className="w-[34px]"><Recharge /></span>
              <span className="leading-[14px]">
                - 32.7
                <br />
                +10.5
              </span>
            </div>
          </div>
        </Group>
      </div>

      <div className="flex gap-2">
        <Group title="Firepower" className="w-[88px] h-[77px]">
          <div className="pl-[3px] flex flex-col gap-px -mt-px">
            <Stat icon={<Gun />} slot="w-[35px]">: 306</Stat>
            <Stat icon={<Volley />} slot="w-[35px]">: 648</Stat>
          </div>
        </Group>
        <Group title="Targeting" className="flex-1 h-[77px]">
          <div className="grid grid-cols-[1fr_74px] gap-y-px pl-[3px] -mt-px">
            <Stat icon={<Range />} slot="w-9">: 140 km</Stat>
            <Stat icon={<Targets />} slot="w-9">: 4</Stat>
            <Stat icon={<Fly />} slot="w-9">: 262.5 mm</Stat>
            <Stat icon={<Rings />} slot="w-9">: 26</Stat>
          </div>
        </Group>
      </div>

      <Group title="Mobility" className="h-[49px]">
        <div className="flex justify-between pl-[5px] pr-[15px] -mt-px">
          <Stat icon={<Speed />}>: 1498 m/s</Stat>
          <Stat icon={<Align />} slot="w-9">: 10.9 s</Stat>
          <Stat icon={<Warp />} slot="w-7">: 3.8 au/s</Stat>
        </div>
      </Group>
    </div>

    <div className="pl-[9px] pt-[10px] leading-5">
      <p className="flex gap-[18px]">
        <span>Signature: 1474.46 m2</span>
        <span>Cargohold: 315 m3</span>
      </p>
      {notes.map((n) => (
        <p key={n}>{n}</p>
      ))}
    </div>
  </Group>
);

const App = () => {
  return (
    <div className="min-h-screen flex flex-col border border-[#15202a] bg-[#b9d1ea] text-[13px] leading-4 text-black font-['Liberation_Sans',Arial,sans-serif]">
      <Gradients />
      <div className="flex-1 flex flex-col border border-[#8fd8ee] px-[6px] pb-[7px]">
        <TitleBar />

        <main className="flex-1 grid grid-cols-[minmax(0,1fr)_307px] gap-[6px] bg-[#f0f0f0] pl-[7px] pr-[6px] pt-px pb-[2px]">
          <section className="flex flex-col">
            <div className="flex gap-2">
              <SetupGroup />
              <CharacterGroup />
            </div>
            <ModuleTable />
            <DroneList />
            <nav className="grid grid-cols-3 mt-1 text-center">
              <button className="h-4 leading-[14px] rounded-[2px] border border-[#6f6f6f] bg-linear-to-b from-[#b9b9b9] to-[#e6e6e6] text-white">
                Active drones: 5 / 5
              </button>
              <button className="h-4">Boosters and Imlpants</button>
              <button className="h-4">Projected effects</button>
            </nav>
          </section>

          <aside className="flex flex-col pb-[5px]">
            <ResourcesGroup />
            <ParametersGroup />
          </aside>
        </main>
      </div>
    </div>
  );
};

export default App;
